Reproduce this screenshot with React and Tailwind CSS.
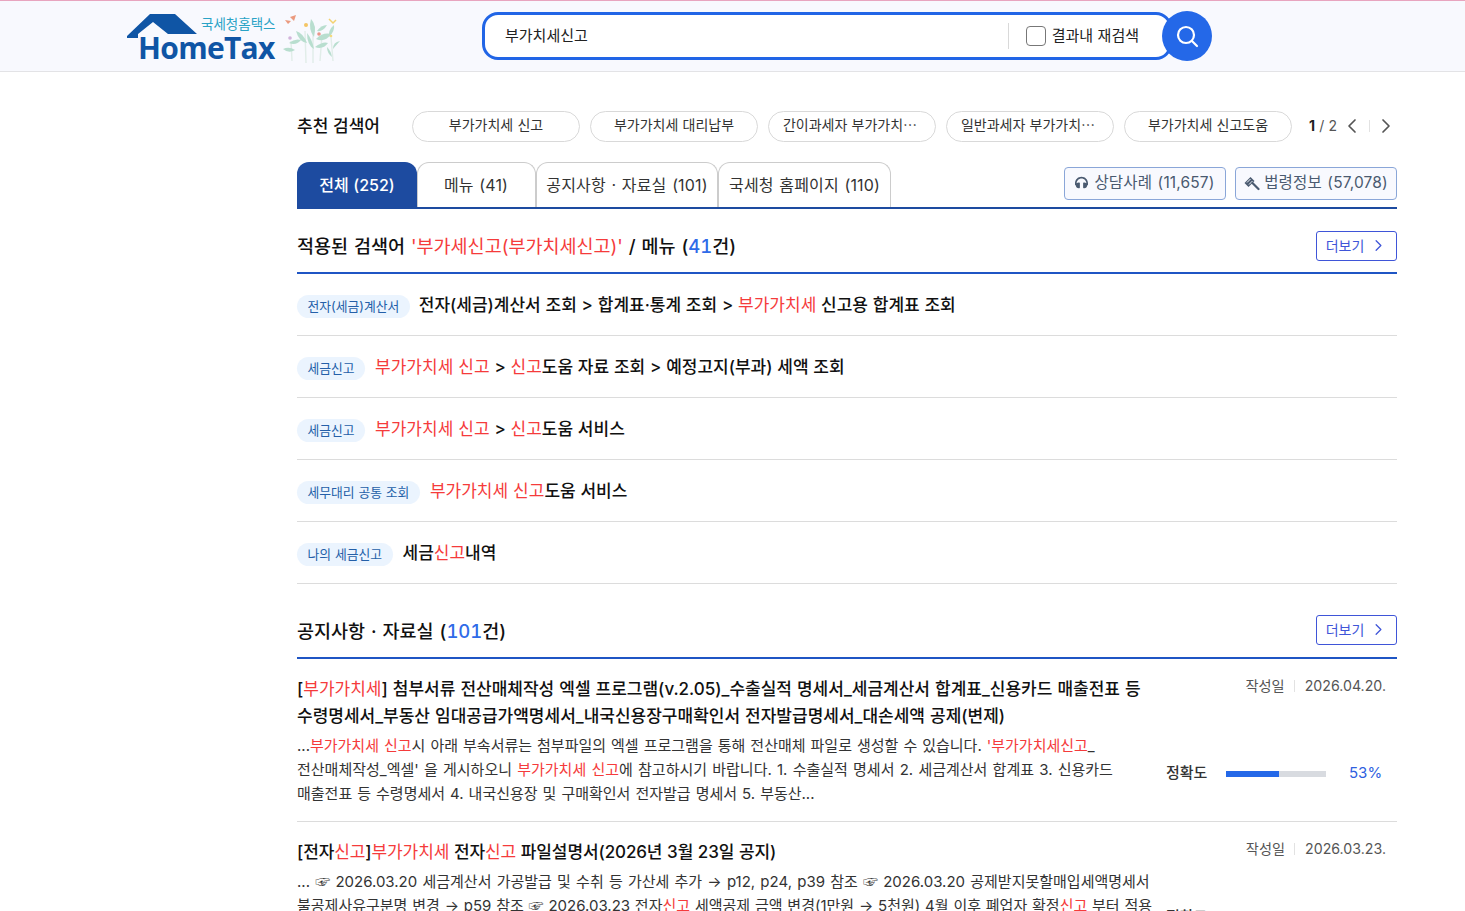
import React from 'react';
import { ChevronLeft, ChevronRight } from 'lucide-react';
import { FaHeadphones } from 'react-icons/fa';

const font = 'font-["Inter","Noto_Sans_CJK_KR",sans-serif]';

const pills = ['부가가치세 신고', '부가가치세 대리납부', '간이과세자 부가가치⋯', '일반과세자 부가가치⋯', '부가가치세 신고도움'];

const R = ({ children }) => <span className="font-normal text-[#f53b3b]">{children}</span>;

const menuRows = [
  { tag: '전자(세금)계산서', text: <>전자(세금)계산서 조회 &gt; 합계표·통계 조회 &gt; <R>부가가치세</R> 신고용 합계표 조회</> },
  { tag: '세금신고', text: <><R>부가가치세 신고</R> &gt; <R>신고</R>도움 자료 조회 &gt; 예정고지(부과) 세액 조회</> },
  { tag: '세금신고', text: <><R>부가가치세 신고</R> &gt; <R>신고</R>도움 서비스</> },
  { tag: '세무대리 공통 조회', text: <><R>부가가치세 신고</R>도움 서비스</> },
  { tag: '나의 세금신고', text: <>세금<R>신고</R>내역</> },
];

const Logo = () => (
  <div className="flex items-start ml-[127px] mt-[12px]">
    <div className="relative w-[150px] h-[50px]">
      <svg width="72" height="30" viewBox="0 0 72 30" className="absolute left-0 top-[1px]">
        <path d="M0 22 L23 0 H48 L70 20 H41 L26 8 L11 20 V24 H0 Z" fill="#0f55a5" />
      </svg>
      <span className="absolute left-[74px] top-[2px] text-[13.5px] leading-[18px] text-[#2aa3c6] whitespace-nowrap">국세청홈택스</span>
      <span className="absolute left-[11px] top-[16px] text-[30px] leading-[38px] font-bold text-[#0f55a5] tracking-[-0.7px] font-['Open_Sans',sans-serif]">HomeTax</span>
    </div>
    <svg width="60" height="50" viewBox="0 0 60 50" className="ml-[4px] opacity-80">
      <path d="M9 4 L15 2 L13 8 Z M4 7 L10 8 L7 11 Z" fill="#e8835f" />
      <path d="M48 6 L52 10 L55 7" fill="none" stroke="#f2c94c" strokeWidth="1.5" />
      <g fill="none" stroke="#dcebe4" strokeWidth="1.4">
        <path d="M11 48 L10 28" />
        <path d="M25 50 L24 18" />
        <path d="M32 50 L32 10" />
        <path d="M39 48 L41 22" />
        <path d="M52 48 L50 24" />
      </g>
      <g fill="#a9d8c4">
        <path d="M8 30 Q14 25 20 27 Q15 33 8 30 Z" />
        <path d="M2 36 Q8 33 14 37 Q8 41 2 36 Z" />
        <path d="M15 18 Q22 20 26 30 Q18 29 15 18 Z" />
        <path d="M30 6 Q36 12 33 24 Q27 16 30 6 Z" />
        <path d="M26 20 Q31 26 33 36 Q26 32 26 20 Z" />
        <path d="M35 26 Q42 19 50 21 Q44 30 35 26 Z" />
        <path d="M34 34 Q42 28 47 30 Q42 37 34 34 Z" />
        <path d="M36 18 Q40 12 46 12 Q42 19 36 18 Z" />
        <path d="M48 24 Q54 18 53 12 Q47 17 48 24 Z" />
        <path d="M52 36 Q57 30 59 28 Q52 29 52 36 Z" />
        <path d="M46 34 Q50 38 51 44 Q46 40 46 34 Z" />
      </g>
      <circle cx="25" cy="12" r="2" fill="#f4b93e" />
      <circle cx="38" cy="21" r="1.8" fill="#e77d6d" />
      <circle cx="9" cy="25" r="1.8" fill="#c9a3d3" />
      <circle cx="50" cy="23" r="1.3" fill="#f4d35e" />
    </svg>
  </div>
);

const SearchBar = () => (
  <div className="flex items-center ml-[141px] mt-[10px] w-[730px] h-[50px]">
    <div className="flex items-center w-[690px] h-[48px] border-[3px] border-[#2165e6] rounded-[16px] bg-white pl-[20px] shrink-0">
      <span className="text-[15px] text-[#222] flex-1">부가치세신고</span>
      <span className="w-px h-[26px] bg-[#d9d9d9]" />
      <span className="w-[20px] h-[20px] ml-[17px] border border-[#777] rounded-[4px]" />
      <span className="ml-[6px] mr-[30px] text-[15px] text-[#222]">결과내 재검색</span>
    </div>
    <div className="flex items-center justify-center w-[50px] h-[50px] -ml-[10px] rounded-full bg-[#2468e8] shrink-0">
      <svg width="24" height="24" viewBox="0 0 24 24" fill="none" stroke="#fff" strokeWidth="2.2">
        <circle cx="11" cy="11" r="8" />
        <path d="M17 17 L22 22" strokeLinecap="round" />
      </svg>
    </div>
  </div>
);

const GavelIcon = () => (
  <svg width="16" height="16" viewBox="0 0 16 16" fill="#4a5a70">
    <path d="M0.5 8 L6.5 2 L10.5 6 L4.5 12 Z" />
    <path d="M3 7.5 L6.5 4 M5 9.5 L8.5 6" stroke="#f8f9fe" strokeWidth="1" />
    <path d="M8.5 8 L14.5 14" stroke="#4a5a70" strokeWidth="2.2" strokeLinecap="round" />
  </svg>
);

const MoreButton = () => (
  <button className="flex items-center justify-center gap-[5px] w-[81px] h-[30px] pl-[1px] pb-[1px] border border-[#3f55d8] rounded-[3px] text-[14px] text-[#3f55d8]">
    더보기
    <ChevronRight size={19} strokeWidth={1.6} />
  </button>
);

const Accuracy = ({ pct }) => (
  <div className="flex items-center">
    <span className="w-[60px] text-[15px] font-medium text-[#333]">정확도</span>
    <span className="w-[100px] h-[6px] bg-[#d8dbe0]">
      <span className="block h-full bg-[#2468e8]" style={{ width: `${pct}%` }} />
    </span>
    <span className="ml-[23px] text-[15px] text-[#2f5fe0]">{pct}%</span>
  </div>
);

const DateInfo = ({ date }) => (
  <div className="flex items-center justify-end -mt-[1px] pr-[11px] text-[14.2px] text-[#555]">
    작성일
    <span className="w-px h-[12px] ml-[9px] mr-[10px] bg-[#e2e2e2]" />
    {date}
  </div>
);

const tabBase = 'flex items-center justify-center h-[45px] rounded-t-[12px] text-[16px]';
const tabOutline = 'border border-b-0 border-[#ccc] tracking-[0.15px] [word-spacing:1px] text-[#333]';
const linkBase = 'flex items-center justify-center w-[162px] h-[33px] pb-[2px] border border-[#8aa6d8] rounded-[4px] bg-[#f8f9fe] text-[15.5px] tracking-[0.15px] [word-spacing:1px] text-[#4a5a70]';
const sectionTitle = 'mt-[3px] text-[18.5px] font-medium [word-spacing:1px]';

export default function App() {
  return (
    <div className={`h-screen overflow-hidden bg-white ${font} [word-spacing:0.25px] text-[#111]`}>
      <header className="flex h-[72px] border-t border-t-[#e8a5bf] border-b border-b-[#e3e3e6] bg-[#f8f9fe]">
        <Logo />
        <SearchBar />
      </header>

      <main className="w-[1100px] ml-[297px]">
        <div className="flex items-center h-[31px] mt-[39px]">
          <h2 className="w-[115px] shrink-0 text-[17px] font-medium">추천 검색어</h2>
          <div className="flex gap-[10px] shrink-0">
            {pills.map((p, i) => (
              <span key={i} className={`flex items-center justify-center w-[168px] h-[31px] pb-[4px] border border-[#d9d9d9] rounded-full text-[14px] text-[#333] ${i === 2 || i === 3 ? 'pr-[4px]' : ''}`}>{p}</span>
            ))}
          </div>
          <div className="flex items-center shrink-0 ml-[17px] pb-[2px] text-[14px] text-[#555] whitespace-nowrap">
            <b className="font-bold text-[#222]">1</b>&nbsp;/ 2
            <ChevronLeft size={24} strokeWidth={1.7} className="ml-[3px] text-[#555]" />
            <span className="w-px h-[12px] ml-[5px] mr-[4px] bg-[#e2e2e2]" />
            <ChevronRight size={24} strokeWidth={1.7} className="text-[#555]" />
          </div>
        </div>

        <div className="flex items-end h-[47px] mt-[20px] border-b-2 border-[#1d4ba0]">
          <span className={`${tabBase} w-[120px] bg-[#1d4ba0] text-white font-medium`}>전체 (252)</span>
          <span className={`${tabBase} ${tabOutline} w-[119px] pr-[1px]`}>메뉴 (41)</span>
          <span className={`${tabBase} ${tabOutline} w-[182px]`}>공지사항 · 자료실 (101)</span>
          <span className={`${tabBase} ${tabOutline} w-[173px]`}>국세청 홈페이지 (110)</span>
          <div className="flex gap-[9px] ml-auto mb-[7px]">
            <span className={`${linkBase} gap-[6px]`}>
              <FaHeadphones size={13} />상담사례 (11,657)
            </span>
            <span className={`${linkBase} gap-[4px]`}>
              <GavelIcon />법령정보 (57,078)
            </span>
          </div>
        </div>

        <div className="flex items-center justify-between h-[65px] pt-[10px] border-b-2 border-[#1f55c4]">
          <h3 className={sectionTitle}>
            적용된 검색어 <span className="font-normal text-[#f53b3b]">'부가세신고(부가치세신고)'</span> / 메뉴 (<span className="text-[#2f6be8] tabular-nums">41</span>건)
          </h3>
          <MoreButton />
        </div>

        {menuRows.map((row, i) => (
          <div key={i} className="flex items-center h-[62px] border-b border-[#dcdcdc]">
            <span className="px-[10.5px] h-[23px] leading-[23px] mt-[4px] rounded-full bg-[#ebf4fe] text-[12.8px] text-[#245fa8]">{row.tag}</span>
            <span className={`${i === 0 ? 'ml-[9px]' : 'ml-[10px]'} mt-[2px] text-[17px] font-medium`}>{row.text}</span>
          </div>
        ))}

        <div className="flex items-center justify-between h-[75px] pt-[31px] pb-[12px] border-b-2 border-[#1f55c4]">
          <h3 className={sectionTitle}>공지사항 · 자료실 (<span className="text-[#2f6be8] tabular-nums">101</span>건)</h3>
          <MoreButton />
        </div>

        <div className="flex h-[163px] border-b border-[#dcdcdc] pt-[17px]">
          <div className="w-[858px]">
            <p className="text-[17px] leading-[27px] font-medium [word-spacing:0.5px] whitespace-nowrap">
              [<R>부가가치세</R>] 첨부서류 전산매체작성 엑셀 프로그램(v.2.05)_수출실적 명세서_세금계산서 합계표_신용카드 매출전표 등<br />
              수령명세서_부동산 임대공급가액명세서_내국신용장구매확인서 전자발급명세서_대손세액 공제(변제)
            </p>
            <p className="mt-[4px] text-[15px] leading-[24px] [word-spacing:0.8px] text-[#333]">
              ...<R>부가가치세 신고</R>시 아래 부속서류는 첨부파일의 엑셀 프로그램을 통해 전산매체 파일로 생성할 수 있습니다. <R>'부가가치세신고</R>_<br />
              <span className="[word-spacing:1px]">전산매체작성_엑셀' 을 게시하오니 <R>부가가치세 신고</R>에 참고하시기 바랍니다. 1. 수출실적 명세서 2. 세금계산서 합계표 3. 신용카드</span><br />
              매출전표 등 수령명세서 4. 내국신용장 및 구매확인서 전자발급 명세서 5. 부동산...
            </p>
          </div>
          <div className="flex-1 ml-[11px]">
            <DateInfo date="2026.04.20." />
            <div className="mt-[66px]"><Accuracy pct={53} /></div>
          </div>
        </div>

        <div className="flex pt-[17px]">
          <div className="w-[858px]">
            <p className="text-[17px] leading-[27px] font-medium tracking-[-0.1px]">
              [전자<R>신고</R>]<R>부가가치세</R> 전자<R>신고</R> 파일설명서(2026년 3월 23일 공지)
            </p>
            <p className="mt-[4px] text-[15px] leading-[24px] [word-spacing:1px] text-[#333] whitespace-nowrap">
              ... ☞ 2026.03.20 세금계산서 가공발급 및 수취 등 가산세 추가 → p12, p24, p39 참조 ☞ 2026.03.20 공제받지못할매입세액명세서<br />
              <span className="[word-spacing:0.6px]">불공제사유구분명 변경 → p59 참조 ☞ 2026.03.23 전자<R>신고</R> 세액공제 금액 변경(1만원 → 5천원) 4월 이후 폐업자 확정<R>신고</R> 부터 적용</span>
            </p>
          </div>
          <div className="flex-1 ml-[11px]">
            <DateInfo date="2026.03.23." />
            <div className="mt-[47px]"><Accuracy pct={74} /></div>
          </div>
        </div>
      </main>
    </div>
  );
}
